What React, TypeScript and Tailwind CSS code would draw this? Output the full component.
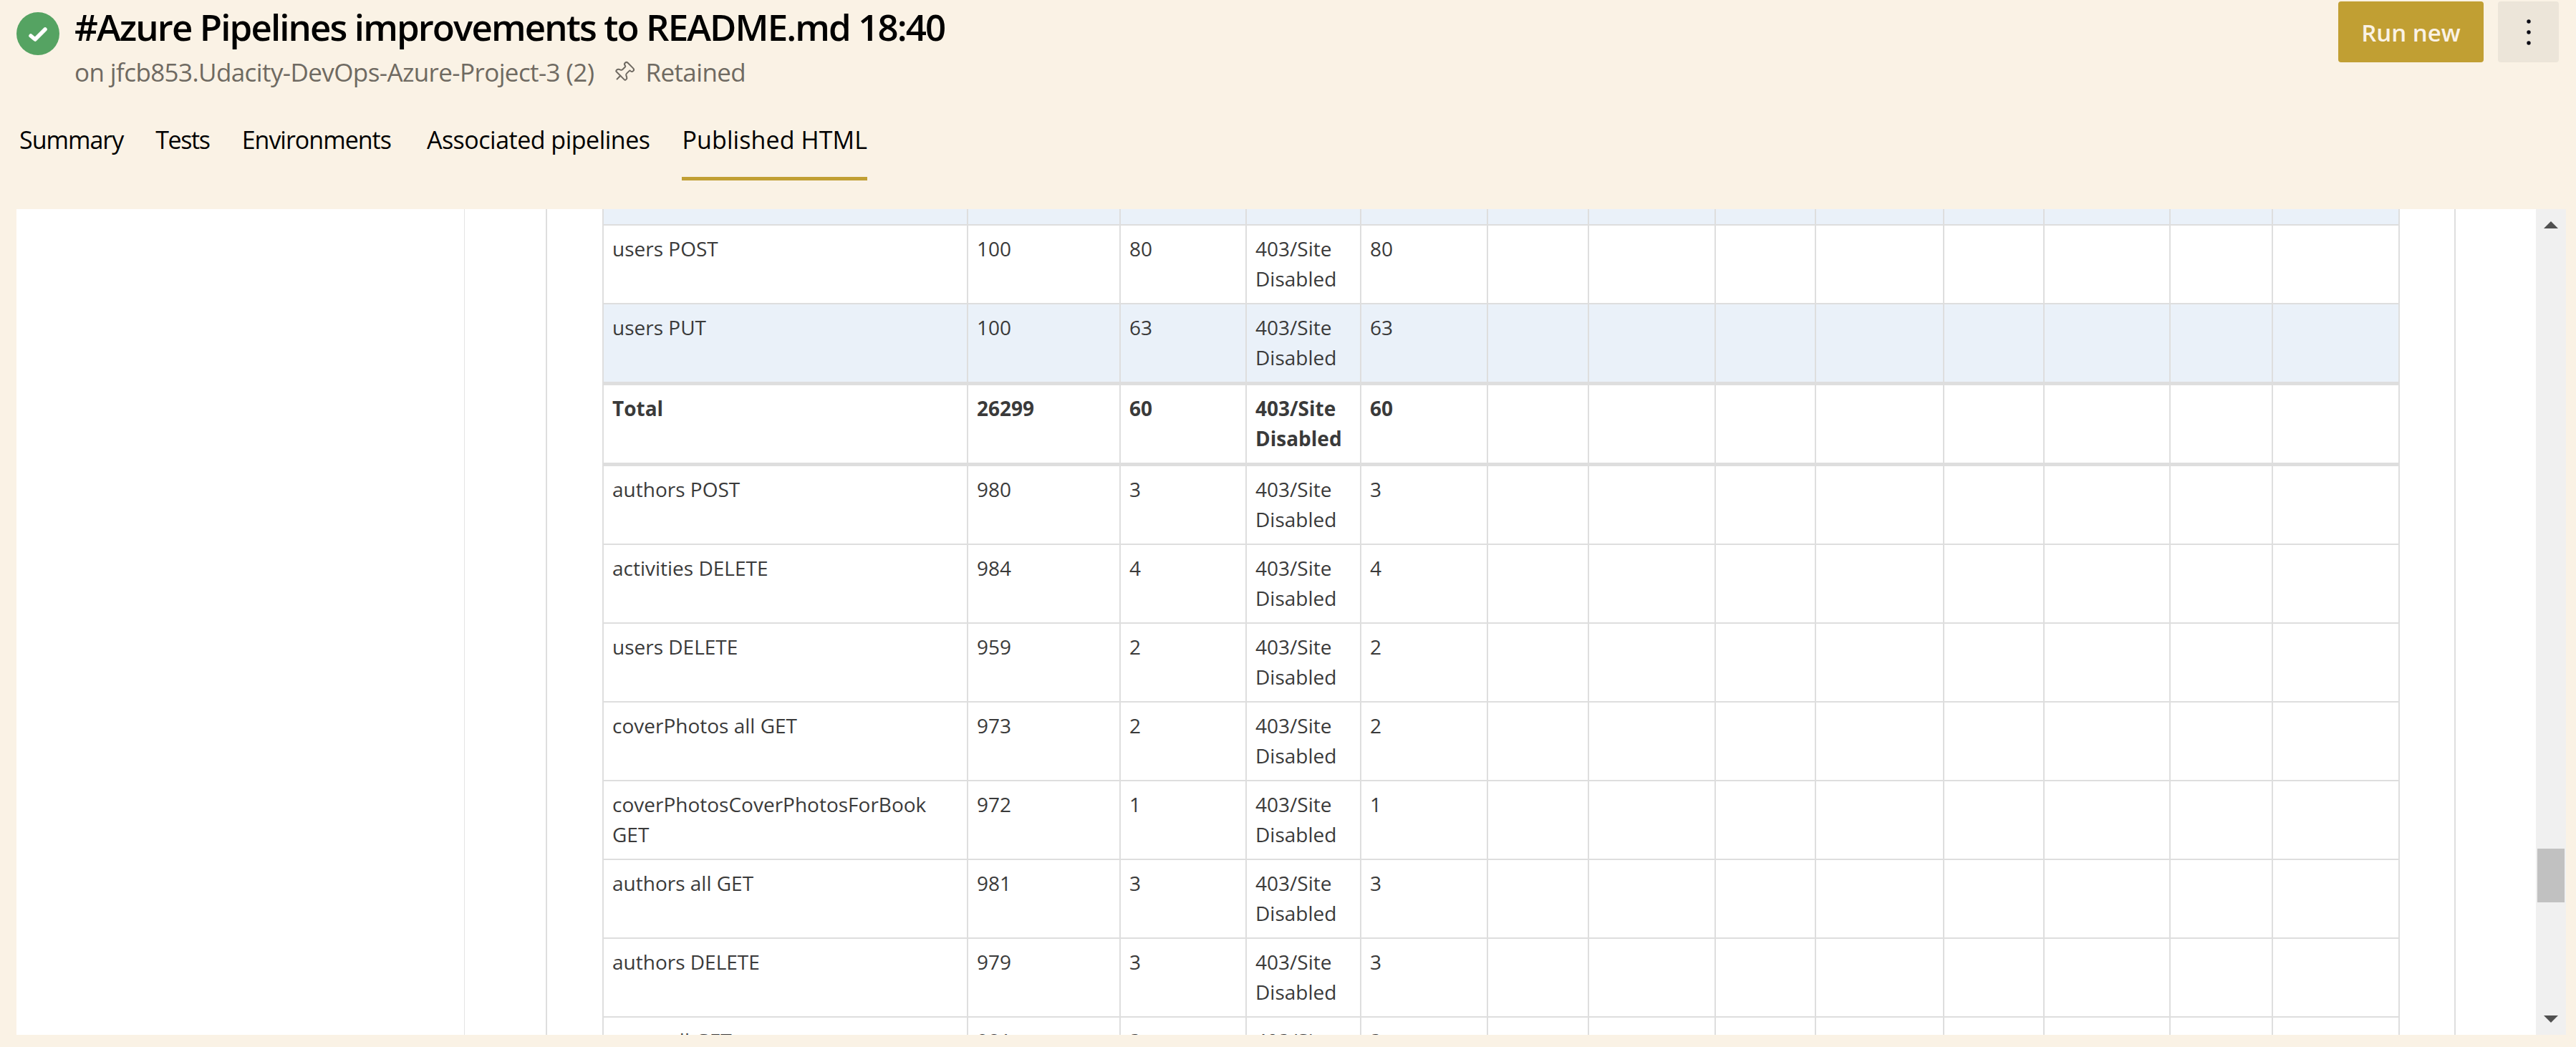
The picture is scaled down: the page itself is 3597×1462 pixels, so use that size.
import { Pin } from 'lucide-react';

const STATUS = '403/Site Disabled';

const rows = [
  { name: 'users POST', samples: '100', errors: '80' },
  { name: 'users PUT', samples: '100', errors: '63', blue: true },
  { name: 'Total', samples: '26299', errors: '60', total: true },
  { name: 'authors POST', samples: '980', errors: '3' },
  { name: 'activities DELETE', samples: '984', errors: '4' },
  { name: 'users DELETE', samples: '959', errors: '2' },
  { name: 'coverPhotos all GET', samples: '973', errors: '2' },
  { name: 'coverPhotosCoverPhotosForBook GET', samples: '972', errors: '1' },
  { name: 'authors all GET', samples: '981', errors: '3' },
  { name: 'authors DELETE', samples: '979', errors: '3' },
  { name: 'users all GET', samples: '981', errors: '3' },
];

const colWidths = [509, 213, 176, 160, 177, 141, 177, 140, 179, 140, 176, 143, 177];
const emptyCols = [0, 1, 2, 3, 4, 5, 6, 7];

const tabs = [
  { label: 'Summary', className: 'h-[80px] tracking-[-1px]' },
  { label: 'Tests', className: 'h-[80px] tracking-[-1.4px]' },
  { label: 'Environments', className: 'h-[80px] tracking-[-1px]' },
  { label: 'Associated pipelines', className: 'h-[80px] tracking-[-0.5px] ml-[5px]' },
  { label: 'Published HTML', className: 'h-[80px] font-medium tracking-[0.1px] border-b-[5px] border-[#c19f33]' },
];

function Header() {
  return (
    <div className="h-[292px] shrink-0 flex flex-col">
      <div className="flex justify-between pl-[23px] pr-[24px] pt-[2px]">
        <div className="flex gap-[21px]">
          <div className="w-[60px] h-[60px] mt-[15px] rounded-full bg-[#55a362]">
            <svg width="60" height="60" viewBox="0 0 60 60" fill="none" stroke="white" strokeWidth="5.5" strokeLinecap="round" strokeLinejoin="round">
              <path d="M20 33 L26 38 L40 24" />
            </svg>
          </div>
          <div>
            <h1 className="text-[51px] leading-[70px] font-semibold text-black tracking-[-1.9px]">
              #Azure Pipelines improvements to README.md 18:40
            </h1>
            <div className="mt-[6px] flex items-center text-[35px] leading-[46px] tracking-[-0.6px] text-[#6f6a62]">
              <span>on jfcb853.Udacity-DevOps-Azure-Project-3 (2)</span>
              <Pin size={32} strokeWidth={1.5} className="ml-[26px] mr-[14px] rotate-45" />
              <span>Retained</span>
            </div>
          </div>
        </div>
        <div className="flex gap-[20px]">
          <button className="w-[203px] h-[85px] pt-[2px] rounded-[4px] bg-[#c19f33] text-[#faf2e5] text-[33px] font-semibold">
            Run new
          </button>
          <button className="w-[85px] h-[85px] rounded-[4px] bg-[#ece5d9] flex items-center justify-center">
            <svg width="6" height="36" viewBox="0 0 6 36" fill="#0a0a14">
              <circle cx="3" cy="3" r="2.7" />
              <circle cx="3" cy="18" r="2.7" />
              <circle cx="3" cy="33" r="2.7" />
            </svg>
          </button>
        </div>
      </div>
      <div className="flex pl-[27px] mt-[48px] gap-[45px] text-[34px] leading-[46px] text-black">
        {tabs.map((tab) => (
          <div key={tab.label} className={tab.className}>
            {tab.label}
          </div>
        ))}
      </div>
    </div>
  );
}

function ResultTable() {
  return (
    <table className="border-collapse table-fixed w-[2508px] text-[28px] leading-[42px] text-[#3a3a3a]">
      <colgroup>
        {colWidths.map((w, i) => (
          <col key={i} style={{ width: w }} />
        ))}
      </colgroup>
      <tbody>
        <tr className="h-[22px] bg-[#eaf1f9]">
          {colWidths.map((_, i) => (
            <td key={i} className="border-2 border-t-0 border-[#dedede]" />
          ))}
        </tr>
        {rows.map((r) => {
          const cell = `border-2 border-[#dedede] align-top px-[12px] pt-[11px] pb-[13px] ${r.total ? 'font-bold border-y-[5px]' : ''}`;
          return (
            <tr key={r.name} className={r.blue ? 'bg-[#eaf1f9]' : 'bg-white'}>
              <td className={cell}>{r.name}</td>
              <td className={cell}>{r.samples}</td>
              <td className={cell}>{r.errors}</td>
              <td className={cell}>{STATUS}</td>
              <td className={cell}>{r.errors}</td>
              {emptyCols.map((i) => (
                <td key={i} className={cell} />
              ))}
            </tr>
          );
        })}
      </tbody>
    </table>
  );
}

function Scrollbar() {
  return (
    <div className="w-[42px] shrink-0 bg-[#f0f0f0] flex flex-col items-center pt-[17px] pb-[17px]">
      <div className="w-0 h-0 border-x-[10px] border-x-transparent border-b-[10px] border-b-[#505050]" />
      <div className="flex-1 w-full px-[2px] flex flex-col">
        <div className="h-[866px] shrink-0" />
        <div className="h-[75px] bg-[#c1c1c1]" />
      </div>
      <div className="w-0 h-0 border-x-[10px] border-x-transparent border-t-[10px] border-t-[#505050]" />
    </div>
  );
}

export default function App() {
  return (
    <div className="w-[3597px] h-[1462px] bg-[#faf2e5] flex flex-col overflow-hidden font-['Open_Sans','Noto_Sans',sans-serif]">
      <Header />
      <div className="ml-[23px] mr-[14px] h-[1153px] shrink-0 bg-white flex overflow-hidden">
        <div className="flex-1 flex min-w-0">
          <div className="w-[626px] shrink-0 border-r border-[#e4e4e4]" />
          <div className="w-[115px] shrink-0 border-r-2 border-[#dedede]" />
          <div className="pl-[77px] pr-[76px] border-r-2 border-[#dedede]">
            <ResultTable />
          </div>
        </div>
        <Scrollbar />
      </div>
    </div>
  );
}
